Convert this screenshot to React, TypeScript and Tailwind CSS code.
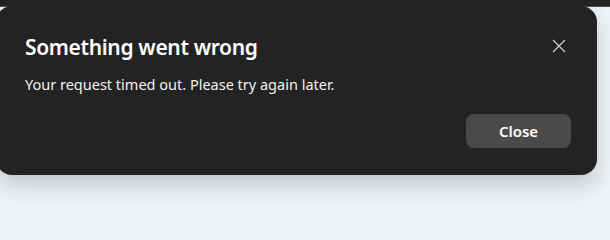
import React from "react";

export default function App() {
  return (
    <div className="w-[610px] h-[240px] bg-[#f0f3f8] overflow-hidden" style={{ fontFamily: '"Noto Sans", "Open Sans", sans-serif' }}>
      <div className="h-[6px] bg-[#232323]" />
      <div className="h-px bg-[#4a4a4a]" />
      <div className="-mt-px ml-[-4px] w-[601px] h-[169px] rounded-[16px] bg-[#232323] shadow-[0_10px_22px_rgba(30,40,60,0.22)] pl-[29px] pr-[26px] pt-[26px] flex flex-col">
        <div className="flex items-start justify-between">
          <h2 className="text-[21px] leading-[30px] font-semibold tracking-[-0.35px] text-white">Something went wrong</h2>
          <button className="w-[26px] h-[26px] mt-[1px] mr-[-1px] flex items-center justify-center text-[#cfcfcf]">
            <svg width="14" height="14" viewBox="0 0 14 14" fill="none" stroke="currentColor" strokeWidth="1.2">
              <path d="M1 1L13 13M13 1L1 13" />
            </svg>
          </button>
        </div>
        <p className="mt-[12px] text-[14.5px] leading-[20px] text-[#f2f2f2]">Your request timed out. Please try again later.</p>
        <div className="mt-[20px] flex justify-end">
          <button className="w-[105px] h-[34px] rounded-[8px] bg-[#4a4a4a] text-white text-[15px] font-semibold">Close</button>
        </div>
      </div>
    </div>
  );
}
